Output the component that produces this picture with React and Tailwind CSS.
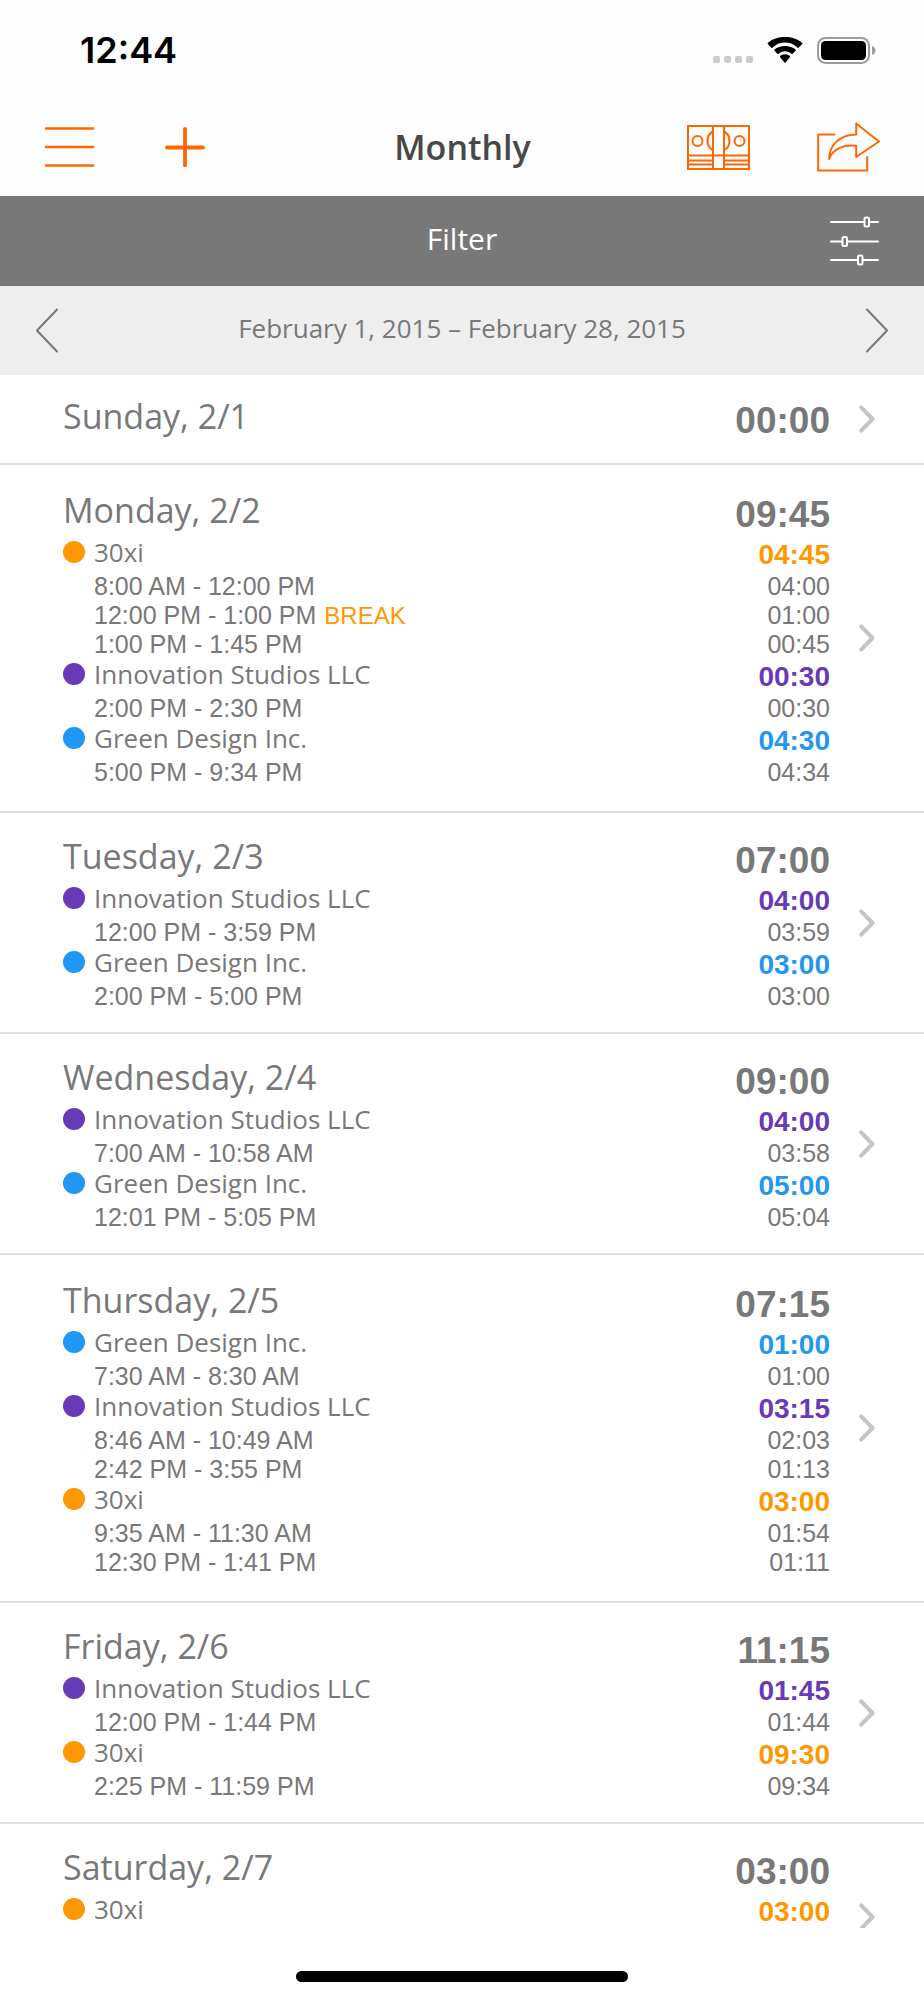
import React, { useState } from 'react';

const DOTS = {
  orange: 'bg-[#ff9800]',
  purple: 'bg-[#673ab7]',
  blue: 'bg-[#2196f3]',
};

const TEXTS = {
  orange: 'text-[#ff9800]',
  purple: 'text-[#673ab7]',
  blue: 'text-[#2196f3]',
};

const xi = { name: '30xi', color: 'orange' };
const innovation = { name: 'Innovation Studios LLC', color: 'purple' };
const green = { name: 'Green Design Inc.', color: 'blue' };

const days = [
  { id: '2-1', title: 'Sunday, 2/1', total: '00:00', projects: [] },
  {
    id: '2-2',
    title: 'Monday, 2/2',
    total: '09:45',
    projects: [
      {
        ...xi,
        total: '04:45',
        entries: [
          { range: '8:00 AM - 12:00 PM', time: '04:00' },
          { range: '12:00 PM - 1:00 PM', time: '01:00', isBreak: true },
          { range: '1:00 PM - 1:45 PM', time: '00:45' },
        ],
      },
      { ...innovation, total: '00:30', entries: [{ range: '2:00 PM - 2:30 PM', time: '00:30' }] },
      { ...green, total: '04:30', entries: [{ range: '5:00 PM - 9:34 PM', time: '04:34' }] },
    ],
  },
  {
    id: '2-3',
    title: 'Tuesday, 2/3',
    total: '07:00',
    projects: [
      { ...innovation, total: '04:00', entries: [{ range: '12:00 PM - 3:59 PM', time: '03:59' }] },
      { ...green, total: '03:00', entries: [{ range: '2:00 PM - 5:00 PM', time: '03:00' }] },
    ],
  },
  {
    id: '2-4',
    title: 'Wednesday, 2/4',
    total: '09:00',
    projects: [
      { ...innovation, total: '04:00', entries: [{ range: '7:00 AM - 10:58 AM', time: '03:58' }] },
      { ...green, total: '05:00', entries: [{ range: '12:01 PM - 5:05 PM', time: '05:04' }] },
    ],
  },
  {
    id: '2-5',
    title: 'Thursday, 2/5',
    total: '07:15',
    projects: [
      { ...green, total: '01:00', entries: [{ range: '7:30 AM - 8:30 AM', time: '01:00' }] },
      {
        ...innovation,
        total: '03:15',
        entries: [
          { range: '8:46 AM - 10:49 AM', time: '02:03' },
          { range: '2:42 PM - 3:55 PM', time: '01:13' },
        ],
      },
      {
        ...xi,
        total: '03:00',
        entries: [
          { range: '9:35 AM - 11:30 AM', time: '01:54' },
          { range: '12:30 PM - 1:41 PM', time: '01:11' },
        ],
      },
    ],
  },
  {
    id: '2-6',
    title: 'Friday, 2/6',
    total: '11:15',
    projects: [
      { ...innovation, total: '01:45', entries: [{ range: '12:00 PM - 1:44 PM', time: '01:44' }] },
      { ...xi, total: '09:30', entries: [{ range: '2:25 PM - 11:59 PM', time: '09:34' }] },
    ],
  },
  {
    id: '2-7',
    title: 'Saturday, 2/7',
    total: '03:00',
    projects: [{ ...xi, total: '03:00', entries: [] }],
  },
];

const WifiIcon = () => (
  <svg width="36" height="26" viewBox="0 0 36 26" aria-hidden="true">
    <path d="M18 5.6c4.9 0 9.300 1.900 12.600 5.100.3.3.7.3 1 0l3.600-3.600c.3-.3.3-.8 0-1.100C30.600 1.900 24.600 0 18 0S5.400 1.900.8 6c-.3.3-.3.8 0 1.100l3.600 3.600c.3.3.7.3 1 0C8.700 7.500 13.100 5.600 18 5.600z" />
    <path d="M18 14.200c2.500 0 4.800.9 6.600 2.500.3.3.7.3 1 0l3-3c.3-.3.3-.8 0-1.100C25.800 10.200 22.100 8.900 18 8.900s-7.800 1.300-10.600 3.700c-.3.3-.3.8 0 1.100l3 3c.3.3.7.3 1 0 1.800-1.600 4.100-2.500 6.600-2.500z" />
    <path d="M22.900 20.200c.3-.3.3-.8 0-1.100-1.300-1.100-3-1.800-4.900-1.800s-3.600.7-4.900 1.800c-.3.3-.3.8 0 1.100l4.300 5.200c.3.4.9.4 1.200 0z" />
  </svg>
);

const BatteryIcon = () => (
  <svg width="59" height="27" viewBox="0 0 59 27" fill="none" aria-hidden="true">
    <rect x="1" y="1" width="51" height="25" rx="7.500" stroke="#9b9b9b" strokeWidth="2" />
    <rect x="4" y="4" width="45" height="19" rx="4.500" fill="#000" />
    <path d="M55 9c2 .8 3.500 2.500 3.500 4.500S57 17.200 55 18z" fill="#9b9b9b" />
  </svg>
);

const MenuIcon = () => (
  <svg width="49" height="40" viewBox="0 0 49 40" stroke="#ff6600" strokeWidth="2.400" aria-hidden="true">
    <path d="M0 1.500h49M0 20h49M0 38.500h49" />
  </svg>
);

const PlusIcon = () => (
  <svg width="40" height="40" viewBox="0 0 40 40" stroke="#ff6600" strokeWidth="3.800" strokeLinecap="round" aria-hidden="true">
    <path d="M2 20.500h36M20 2v36.500" />
  </svg>
);

const MoneyIcon = () => (
  <svg width="63" height="45" viewBox="0 0 63 45" fill="none" stroke="#ff6600" strokeWidth="2" aria-hidden="true">
    <path d="M1 1h61v43H1zM26 1v43M37 1v43M1 30.500h61M1 35.500h25M1 39.500h25M37 35.500h25M37 39.500h25" />
    <circle cx="10.500" cy="16" r="5" />
    <circle cx="52.500" cy="16" r="5" />
    <path d="M26 6.500c-3.500 1.800-5.500 5.500-5.500 9.500s2 7.500 5.500 9.500M37 6.500c3.500 1.800 5.500 5.500 5.500 9.500s-2 7.500-5.500 9.500" />
  </svg>
);

const ShareIcon = () => (
  <svg width="63" height="50" viewBox="0 0 63 50" fill="none" stroke="#ff6600" strokeWidth="2" strokeLinejoin="round" strokeLinecap="round" aria-hidden="true">
    <path d="M17.500 12.500H1.200v36h49V35" />
    <path d="M39.200 1.500 62 19.500 39.200 35V23.800c-11.500-1.300-23.500 2.500-27 13.200C12 24 22 12.500 39.200 12.500z" />
  </svg>
);

const SlidersIcon = () => (
  <svg width="49" height="50" viewBox="0 0 49 50" fill="none" stroke="#fff" strokeWidth="2" strokeLinecap="round" aria-hidden="true">
    <path d="M1 6h33M40 6h8M1 25.500h11M18 25.500h30M1 44h26M33 44h15" />
    <rect x="34.500" y="1.500" width="4.500" height="9" rx="1.500" />
    <rect x="12.500" y="21" width="4.500" height="9" rx="1.500" />
    <rect x="28" y="39.500" width="4.500" height="9" rx="1.500" />
  </svg>
);

const ArrowIcon = ({ d }) => (
  <svg width="22" height="45" viewBox="0 0 22 45" fill="none" stroke="#787878" strokeWidth="2" strokeLinecap="round" strokeLinejoin="round" aria-hidden="true">
    <path d={d} />
  </svg>
);

const Chevron = () => (
  <svg className="mb-1 shrink-0" width="16" height="28" viewBox="0 0 16 28" fill="none" stroke="#c4c4c7" strokeWidth="4" strokeLinecap="round" strokeLinejoin="round" aria-hidden="true">
    <path d="M2.200 2.400 13.500 14 2.200 25.600" />
  </svg>
);

const StatusBar = () => (
  <div className="flex h-[100px] items-center justify-between pr-12 pl-20 text-black">
    <span className="font-['Inter',sans-serif] text-[36px] font-semibold">12:44</span>
    <div className="flex items-center gap-[14px]">
      <div className="flex gap-1 pt-[18px]">
        <span className="size-[7px] rounded-xs bg-[#cbcbcb]" />
        <span className="size-[7px] rounded-xs bg-[#cbcbcb]" />
        <span className="size-[7px] rounded-xs bg-[#cbcbcb]" />
        <span className="size-[7px] rounded-xs bg-[#cbcbcb]" />
      </div>
      <WifiIcon />
      <BatteryIcon />
    </div>
  </div>
);

const NavBar = () => (
  <nav className="grid h-24 grid-cols-[1fr_auto_1fr] items-center pr-11 pb-0.5 pl-[45px]">
    <div className="flex items-center gap-[71px]">
      <button type="button" aria-label="Menu">
        <MenuIcon />
      </button>
      <button type="button" aria-label="Add entry">
        <PlusIcon />
      </button>
    </div>
    <h1 className="text-[34px] font-semibold text-[#484848]">Monthly</h1>
    <div className="flex items-center justify-end gap-[67px]">
      <button type="button" aria-label="Payments">
        <MoneyIcon />
      </button>
      <button type="button" aria-label="Share">
        <ShareIcon />
      </button>
    </div>
  </nav>
);

const ProjectBlock = ({ project }) => (
  <div>
    <div className="flex h-[35px] items-start justify-between">
      <div className="flex gap-[9px]">
        <span className={`mt-1 size-[22px] rounded-full ${DOTS[project.color]}`} />
        <span className="text-[26px] leading-[30px]">{project.name}</span>
      </div>
      <span className={`font-['Liberation_Sans',sans-serif] text-[28px] leading-[35px] font-bold ${TEXTS[project.color]}`}>
        {project.total}
      </span>
    </div>
    {project.entries.map((entry) => (
      <div
        key={entry.range}
        className="flex justify-between pl-[31px] font-['Liberation_Sans',sans-serif] text-[25px] leading-[29px]"
      >
        <span>
          {entry.range}
          {entry.isBreak && <span className="pl-2 text-2xl leading-[29px] text-[#ff9800]">BREAK</span>}
        </span>
        <span>{entry.time}</span>
      </div>
    ))}
  </div>
);

// Longer days get a bit more room above and below
const rowPadding = (day) => {
  if (day.projects.length === 0) return 'pt-6 pb-5';
  if (day.projects.length > 2) return 'pt-7 pb-6';
  return 'pt-[26px] pb-[21px]';
};

const DayRow = ({ day }) => (
  <li className="shrink-0 border-b-2 border-[#e0e0e0] last:min-h-[184px] last:border-0">
    <a
      href={`#${day.id}`}
      className={`flex min-h-[inherit] items-center gap-[29px] pr-[49px] pl-[63px] text-[#787878] ${rowPadding(day)}`}
    >
      <div className="grow self-start">
        <div className="flex h-11 items-start justify-between">
          <h2 className="text-[34px] leading-[34px]">{day.title}</h2>
          <span className="font-['Liberation_Sans',sans-serif] text-[37px] leading-[44px] font-bold">{day.total}</span>
        </div>
        {day.projects.map((project) => (
          <ProjectBlock key={project.name} project={project} />
        ))}
      </div>
      <Chevron />
    </a>
  </li>
);

const App = () => {
  const [range] = useState('February 1, 2015 – February 28, 2015');

  return (
    <div className="flex h-screen flex-col bg-white font-['Open_Sans',sans-serif] text-[#787878]">
      <header className="bg-[#fdfdfd]">
        <StatusBar />
        <NavBar />
      </header>

      <button
        type="button"
        className="grid h-[90px] shrink-0 grid-cols-[1fr_auto_1fr] items-center bg-[#787878] pr-[45px] pl-[45px] text-white"
      >
        <span className="col-start-2 pb-1.5 text-[30px]">Filter</span>
        <span className="justify-self-end">
          <SlidersIcon />
        </span>
      </button>

      <div className="flex h-[89px] shrink-0 items-center justify-between bg-[#eeeeee] px-9">
        <button type="button" aria-label="Previous month">
          <ArrowIcon d="M21 1.500 1 22.500l20 21" />
        </button>
        <span className="pb-1 text-[26px]">{range}</span>
        <button type="button" aria-label="Next month">
          <ArrowIcon d="M1 1.500l20 21-20 21" />
        </button>
      </div>

      <ul className="flex min-h-0 grow flex-col overflow-y-auto [scrollbar-width:none]">
        {days.map((day) => (
          <DayRow key={day.id} day={day} />
        ))}
      </ul>

      <footer className="flex h-[72px] shrink-0 items-end justify-center pb-[18px]">
        <div className="h-[11px] w-[36%] rounded-full bg-black" />
      </footer>
    </div>
  );
};

export default App;
